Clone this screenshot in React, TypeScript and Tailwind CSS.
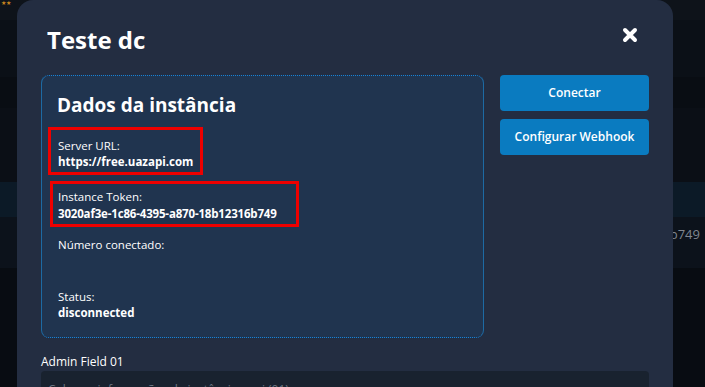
export default function App() {
  const font = { fontFamily: '"Open Sans", "Noto Sans", sans-serif' };
  return (
    <div className="relative h-[387px] w-[705px] overflow-hidden bg-[#080c12]" style={font}>
      {/* page behind the overlay */}
      <div className="flex flex-col">
        <div className="h-[20px] bg-[#0e131a] px-[1px] text-[6px] leading-[6px] text-[#c9851e]">★★</div>
        <div className="h-[57px] bg-[#0b1017]" />
        <div className="h-[31px] bg-[#090d13]" />
        <div className="h-[74px] bg-[#0b0f16]" />
        <div className="h-[35px] bg-[#0c1a27]" />
        <div className="flex h-[51px] justify-end bg-[#0c121b] pr-[5px] pt-[8px] text-[13px] leading-[18px] text-[#7f8690]">
          3020af3e-1c86-4395-a870-18b12316b749
        </div>
      </div>

      {/* modal */}
      <div className="absolute left-[17px] top-0 h-[400px] w-[656px] rounded-t-[16px] bg-[#232d41] px-[24px] pt-[24px]">
        <div className="flex items-center justify-between pl-[6px] pr-[11px]">
          <h2 className="text-[24px] font-bold leading-[32px] text-white">Teste dc</h2>
          <svg width="16" height="16" viewBox="0 0 16 16" className="mt-[-10px]">
            <path d="M3 3 L13 13 M13 3 L3 13" stroke="white" strokeWidth="4" strokeLinecap="round" />
          </svg>
        </div>

        <div className="mt-[19px] flex gap-[16px]">
          <div className="h-[263px] w-[443px] rounded-[8px] border border-[#1d6aa3] bg-[#20344f] px-[6px] pt-[16px] [border-bottom-color:#1682d6] [border-bottom-style:dotted] [border-top-color:#1682d6] [border-top-style:dotted]">
            <h3 className="px-[9px] text-[19px] font-bold leading-[26px] text-white">Dados da instância</h3>
            <div className="mt-[9px] w-[155px] border-[3px] border-[#ee0000] px-[7px] pb-[2px] pt-[8px] text-[11.5px] leading-[16px] text-white">
              <div>Server URL:</div>
              <div className="font-bold">https://free.uazapi.com</div>
            </div>
            <div className="ml-[2px] mt-[6px] w-[249px] border-[3px] border-[#ee0000] px-[5px] pb-[2px] pt-[4px] text-[11.5px] leading-[17px] text-white">
              <div>Instance Token:</div>
              <div className="font-bold tracking-[-0.17px]">3020af3e-1c86-4395-a870-18b12316b749</div>
            </div>
            <div className="px-[10px] pt-[10px] text-[11.5px] leading-[16px] text-white">
              <div>Número conectado:</div>
              <div className="h-[36px]" />
              <div>Status:</div>
              <div className="font-bold">disconnected</div>
            </div>
          </div>

          <div className="flex w-[149px] flex-col gap-[8px]">
            <button className="h-[36px] rounded-[4px] bg-[#0a7bc0] text-[12px] font-semibold text-white">Conectar</button>
            <button className="h-[36px] rounded-[4px] bg-[#0a7bc0] text-[12px] font-semibold text-white">Configurar Webhook</button>
          </div>
        </div>

        <div className="mt-[16px] text-[12px] leading-[16px] text-white">Admin Field 01</div>
        <div className="mt-[1px] h-[40px] w-[608px] rounded-[4px] bg-[#19222f] px-[7px] pt-[10px] text-[12px] text-[#6b7380]">
          Coloque informações da instância aqui (01)
        </div>
      </div>
    </div>
  );
}
